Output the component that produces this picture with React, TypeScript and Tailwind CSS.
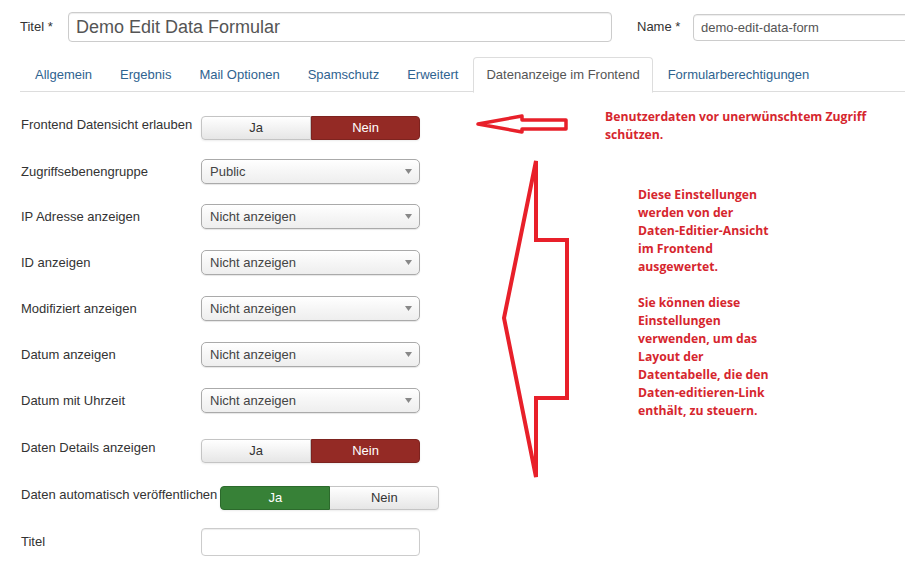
import React from 'react';

const tabs = ['Allgemein', 'Ergebnis', 'Mail Optionen', 'Spamschutz', 'Erweitert', 'Datenanzeige im Frontend', 'Formularberechtigungen'];
const ACTIVE_TAB = 5;

type Row =
  | { label: string; kind: 'toggle'; on: 'ja' | 'nein'; mt: string; lpt: string }
  | { label: string; kind: 'select'; value: string; mt: string; lpt: string }
  | { label: string; kind: 'input'; mt: string; lpt: string };

const rows: Row[] = [
  { label: 'Frontend Datensicht erlauben', kind: 'toggle', on: 'nein', mt: 'mt-[24px]', lpt: 'pt-0' },
  { label: 'Zugriffsebenengruppe', kind: 'select', value: 'Public', mt: 'mt-[19px]', lpt: 'pt-[4px]' },
  { label: 'IP Adresse anzeigen', kind: 'select', value: 'Nicht anzeigen', mt: 'mt-[20px]', lpt: 'pt-[4px]' },
  { label: 'ID anzeigen', kind: 'select', value: 'Nicht anzeigen', mt: 'mt-[21px]', lpt: 'pt-[4px]' },
  { label: 'Modifiziert anzeigen', kind: 'select', value: 'Nicht anzeigen', mt: 'mt-[21px]', lpt: 'pt-[4px]' },
  { label: 'Datum anzeigen', kind: 'select', value: 'Nicht anzeigen', mt: 'mt-[21px]', lpt: 'pt-[4px]' },
  { label: 'Datum mit Uhrzeit', kind: 'select', value: 'Nicht anzeigen', mt: 'mt-[21px]', lpt: 'pt-[4px]' },
  { label: 'Daten Details anzeigen', kind: 'toggle', on: 'nein', mt: 'mt-[26px]', lpt: 'pt-0' },
  { label: 'Daten automatisch veröffentlichen', kind: 'toggle', on: 'ja', mt: 'mt-[23px]', lpt: 'pt-0' },
  { label: 'Titel', kind: 'input', mt: 'mt-[18px]', lpt: 'pt-[5px]' },
];

const Toggle = ({ on }: { on: 'ja' | 'nein' }) => (
  <div className="flex w-[219px] h-[24px] text-[13px] leading-[22px] shadow-[0_1px_2px_rgba(0,0,0,0.08)] rounded-[4px]">
    <div
      className={
        on === 'ja'
          ? 'w-[110px] text-center rounded-l-[4px] border border-[#2c6a2c] bg-[#378137] text-white'
          : 'w-[110px] text-center rounded-l-[4px] border border-[#c4c4c4] bg-gradient-to-b from-white to-[#e6e6e6] text-[#333]'
      }
    >
      Ja
    </div>
    <div
      className={
        on === 'nein'
          ? 'flex-1 text-center rounded-r-[4px] border border-[#7d231f] bg-[#942a25] text-white'
          : 'flex-1 text-center rounded-r-[4px] border border-l-0 border-[#c4c4c4] bg-gradient-to-b from-white to-[#e6e6e6] text-[#333]'
      }
    >
      Nein
    </div>
  </div>
);

const Select = ({ value }: { value: string }) => (
  <div className="relative w-[219px] h-[25px] rounded-[5px] border border-[#aaa] bg-gradient-to-b from-white via-[#f6f6f6] to-[#eee] shadow-[0_1px_1px_rgba(0,0,0,0.1)] text-[13px] leading-[23px] text-[#444] pl-[8px]">
    {value}
    <svg className="absolute right-[7px] top-[9px]" width="7" height="5" viewBox="0 0 7 5">
      <polygon points="0,0 7,0 3.5,5" fill="#888" />
    </svg>
  </div>
);

const note1 = ['Benutzerdaten vor unerwünschtem Zugriff', 'schützen.'];
const note2 = [
  'Diese Einstellungen',
  'werden von der',
  'Daten-Editier-Ansicht',
  'im Frontend',
  'ausgewertet.',
  '',
  'Sie können diese',
  'Einstellungen',
  'verwenden, um das',
  'Layout der',
  'Datentabelle, die den',
  'Daten-editieren-Link',
  'enthält, zu steuern.',
];

export default function App() {
  return (
    <div className="relative w-full h-[567px] overflow-hidden bg-white font-['Liberation_Sans',Arial,sans-serif] text-[13px] text-[#333]">
      <div className="pl-[20px] pt-[12px]">
        <div className="flex items-center h-[30px] whitespace-nowrap">
          <div className="w-[48px] shrink-0">Titel *</div>
          <div className="w-[544px] h-[30px] shrink-0 rounded-[4px] border border-[#ccc] shadow-[inset_0_1px_1px_rgba(0,0,0,0.075)] px-[7px] text-[18px] leading-[28px] text-[#555]">
            Demo Edit Data Formular
          </div>
          <div className="ml-[25px] w-[56px] shrink-0">Name *</div>
          <div className="w-[240px] h-[27px] shrink-0 rounded-[4px] border border-[#ccc] shadow-[inset_0_1px_1px_rgba(0,0,0,0.075)] px-[7px] leading-[25px] text-[#555]">
            demo-edit-data-form
          </div>
        </div>

        <div className="mt-[15px] flex h-[35px] pl-[2px] border-b border-[#ddd] whitespace-nowrap">
          {tabs.map((t, i) =>
            i === ACTIVE_TAB ? (
              <div key={t} className="mr-[2px] -mb-px px-[12px] h-[36px] leading-[34px] rounded-t-[4px] border border-[#ddd] border-b-white bg-white text-[#555]">
                {t}
              </div>
            ) : (
              <div key={t} className="mr-[2px] px-[12px] h-[35px] leading-[34px] border border-transparent text-[#2f6390]">
                {t}
              </div>
            )
          )}
        </div>

        <div className="flex flex-col pl-[1px]">
          {rows.map((r) => (
            <div key={r.label} className={`flex items-start ${r.mt}`}>
              <div className={`min-w-[180px] pr-[3px] whitespace-nowrap leading-[18px] ${r.lpt}`}>{r.label}</div>
              {r.kind === 'toggle' && <Toggle on={r.on} />}
              {r.kind === 'select' && <Select value={r.value} />}
              {r.kind === 'input' && (
                <div className="w-[219px] h-[28px] rounded-[4px] border border-[#ccc] shadow-[inset_0_1px_1px_rgba(0,0,0,0.075)]" />
              )}
            </div>
          ))}
        </div>
      </div>

      {/* red annotations drawn over the screenshot */}
      <svg className="absolute left-0 top-0 pointer-events-none" width="905" height="567" viewBox="0 0 905 567">
        <polygon
          points="478,124 522,116 522,120 566,120 566,129 522,129 522,132"
          fill="none"
          stroke="#e8202a"
          strokeWidth="3.5"
          strokeLinejoin="round"
        />
        <polygon
          points="536,161 504,318 536,477 536,398 567,398 567,240 536,240"
          fill="none"
          stroke="#e8202a"
          strokeWidth="4"
          strokeLinejoin="miter"
        />
      </svg>
      <div className="absolute left-[605px] top-[108px] font-['Open_Sans',sans-serif] font-bold text-[12.2px] leading-[18px] text-[#d6262e] whitespace-nowrap">
        {note1.map((l) => (
          <div key={l}>{l}</div>
        ))}
      </div>
      <div className="absolute left-[638px] top-[186px] font-['Open_Sans',sans-serif] font-bold text-[12.2px] leading-[18px] text-[#d6262e] whitespace-nowrap">
        {note2.map((l, i) => (
          <div key={i} className="h-[18px]">
            {l}
          </div>
        ))}
      </div>
    </div>
  );
}
